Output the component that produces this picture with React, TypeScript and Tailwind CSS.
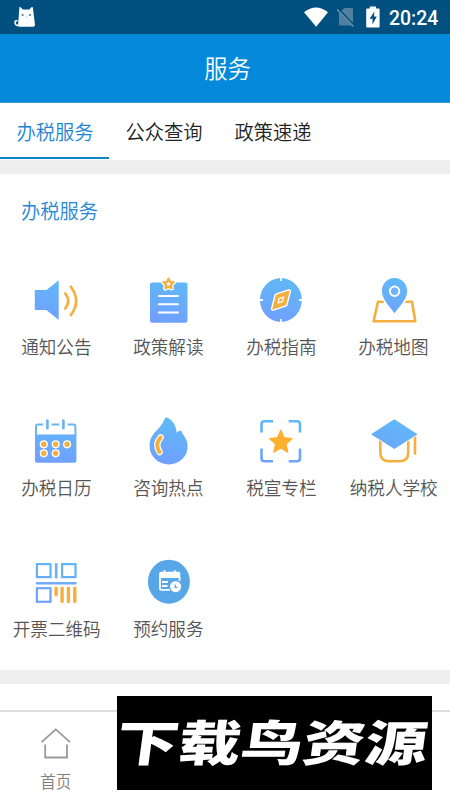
import React, { useState } from 'react';

interface ServiceItem {
    label: string;
    icon: React.ReactNode;
}

const BLUE = 'url(#blue)';
const ORANGE = '#f3b03f';

const STAR = 'M0 -10 L2.9 -3.6 L9.8 -2.9 L4.6 1.7 L6.1 8.6 L0 5 L-6.1 8.6 L-4.6 1.7 L-9.8 -2.9 L-2.9 -3.6 Z';

const services: ServiceItem[] = [
    {
        label: '通知公告',
        icon: (
            <>
                <path d="M3.8 15H15.5L27.7 5.3V45L15.5 35H3.8Z" fill={BLUE} />
                <path d="M34.2 18.5Q40.5 26 34.2 33.5M39.8 11.8Q50.5 26 39.8 40" fill="none" stroke={ORANGE} strokeWidth="2.7" strokeLinecap="round" />
            </>
        ),
    },
    {
        label: '政策解读',
        icon: (
            <>
                <rect x="6" y="7.5" width="37.5" height="40.3" rx="2" fill={BLUE} />
                <path d="M14.8 21H34M14.8 29.2H34M14.8 37.6H34" stroke="#fff" strokeWidth="2" strokeLinecap="round" />
                <path d={STAR} transform="translate(24.5 8.8) scale(.52)" fill="#fff" stroke="#fff" strokeWidth="9" strokeLinejoin="round" />
                <path d={STAR} transform="translate(24.5 8.8) scale(.52)" fill="#fff" stroke={ORANGE} strokeWidth="4.2" strokeLinejoin="round" />
            </>
        ),
    },
    {
        label: '办税指南',
        icon: (
            <>
                <ellipse cx="24.9" cy="25" rx="20.9" ry="22" fill={BLUE} />
                <path d="M24.9 2V6M24.9 44V48M3 25H7M43 25H47" stroke="#fff" strokeWidth="1.8" />
                <path d="M33 16.2L20.4 20.4L17 33.8L29.6 29.6Z" fill={ORANGE} stroke="#fff" strokeWidth="4.2" strokeLinejoin="round" />
                <path d="M33 16.2L20.4 20.4L17 33.8L29.6 29.6Z" fill={ORANGE} stroke={ORANGE} strokeWidth="1.4" strokeLinejoin="round" />
                <path d="M27.6 22.2L23.1 23.5L22.2 27.9L26.7 26.5Z" fill={ORANGE} stroke="#fff" strokeWidth="1.2" />
            </>
        ),
    },
    {
        label: '办税地图',
        icon: (
            <>
                <path d="M9 26.8H43L46.3 46.2H4.6Z" fill="none" stroke={ORANGE} strokeWidth="2.6" strokeLinejoin="round" />
                <path d="M25.5 38.3C22 33 12.9 24.5 12.9 16.2C12.9 8.8 18.4 3 25.5 3S38.2 8.8 38.2 16.2C38.2 24.5 29 33 25.5 38.3Z" fill={BLUE} stroke="#fff" strokeWidth="4" paintOrder="stroke" />
                <circle cx="25.6" cy="16.2" r="4.7" fill="#6fb4ff" stroke="#fff" strokeWidth="2" />
            </>
        ),
    },
    {
        label: '办税日历',
        icon: (
            <>
                <path d="M4 18.4H45.4V44.7Q45.4 46.7 43.4 46.7H6Q4 46.7 4 44.7Z" fill={BLUE} />
                <path d="M12.2 8.6H7Q5 8.6 5 10.6V20M36.6 8.6H42.4Q44.4 8.6 44.4 10.6V20M20.6 8.6H28.2" fill="none" stroke="#6bb3fb" strokeWidth="2" />
                <path d="M16.4 4.6V12.2M32.4 4.6V12.2" stroke="#65b3f8" strokeWidth="2.6" strokeLinecap="round" />
                <g fill={ORANGE} stroke="#fff" strokeWidth="1.4">
                    <circle cx="12.8" cy="28.3" r="3.4" />
                    <circle cx="24.7" cy="28.3" r="3.4" />
                    <circle cx="36.1" cy="28.3" r="3.4" />
                    <circle cx="12.8" cy="37.3" r="3.4" />
                    <circle cx="24.7" cy="37.3" r="3.4" />
                </g>
            </>
        ),
    },
    {
        label: '咨询热点',
        icon: (
            <>
                <path d="M23.6 1.7C29 4.5 32.3 10 32.7 17C34 14.8 35.7 14.2 37.4 15C38.2 19 43.6 21.5 43.6 30.5C43.6 40.8 35 48.4 24.8 48.4S5.6 40.8 5.6 30C5.6 17 16 14.5 19.8 4.6C20.6 2.4 21.8 .9 23.6 1.7Z" fill={BLUE} />
                <path d="M16.6 21.4Q10.4 28.5 15.6 36" fill="none" stroke="#fff" strokeWidth="6.4" strokeLinecap="round" />
                <path d="M16.6 21.4Q10.4 28.5 15.6 36" fill="none" stroke={ORANGE} strokeWidth="4" strokeLinecap="round" />
            </>
        ),
    },
    {
        label: '税宣专栏',
        icon: (
            <>
                <path d="M17 5.2H8.5Q5.5 5.2 5.5 8.2V16.5M32.7 5.2H41Q44 5.2 44 8.2V16.5M5.5 32.5V42.2Q5.5 45.2 8.5 45.2H17M44 32.5V42.2Q44 45.2 41 45.2H32.7" fill="none" stroke={BLUE} strokeWidth="2.6" />
                <path d={STAR} transform="translate(24.8 26) scale(1.15 1.2)" fill="#fcb02e" stroke="#fcb02e" strokeWidth="1" strokeLinejoin="round" />
            </>
        ),
    },
    {
        label: '纳税人学校',
        icon: (
            <>
                <path d="M11.3 23V36.5Q11.3 45.2 20 45.2H30.5Q39.2 45.2 39.2 36.5V23M46 20V37.5" fill="none" stroke={ORANGE} strokeWidth="2.6" strokeLinecap="round" />
                <path d="M25.3 3.3L48.6 18.3L25.3 33L2 18.3Z" fill={BLUE} stroke="#fff" strokeWidth="1.6" paintOrder="stroke" />
            </>
        ),
    },
    {
        label: '开票二维码',
        icon: (
            <g transform="translate(0 -1)">
                <g fill="none" stroke={BLUE} strokeWidth="2.2">
                    <rect x="5.9" y="8.1" width="13.6" height="13" />
                    <rect x="31.1" y="8.1" width="13.4" height="13" />
                    <rect x="5.9" y="32.2" width="13.6" height="13.6" />
                </g>
                <rect x="23.9" y="7" width="2.6" height="15.5" rx="1" fill="#70adff" />
                <rect x="4.8" y="26" width="40.8" height="2.6" rx="1" fill="#70adff" />
                <path d="M25.1 32.3V38.8M31.1 32.3V45.5M37.4 32.3V45.5M43.8 32.3V45.5" stroke={ORANGE} strokeWidth="3.4" strokeLinecap="round" />
            </g>
        ),
    },
    {
        label: '预约服务',
        icon: (
            <g transform="translate(0 -1)">
                <ellipse cx="24.9" cy="25.7" rx="21" ry="22" fill="#57a7e8" />
                <path d="M15.2 22V17.3Q15.2 15.8 16.7 15.8H34.7Q36.2 15.8 36.2 17.3V22Z" fill="#fff" />
                <path d="M20.5 14.8V18M30.8 14.8V18" stroke="#fff" strokeWidth="1.8" strokeLinecap="round" />
                <path d="M16 21V32.8Q16 33.8 17 33.8H26M35.6 21V25" fill="none" stroke="#fff" strokeWidth="1.8" />
                <path d="M18 26H24M18 30H23.5" stroke="#fff" strokeWidth="1.8" />
                <circle cx="31.6" cy="30.7" r="6" fill="#fff" stroke="#57a7e8" strokeWidth="1" />
                <path d="M31.2 28.6V31.3H33.4" fill="none" stroke="#57a7e8" strokeWidth="1.3" />
            </g>
        ),
    },
];

const tabs = ['办税服务', '公众查询', '政策速递'];

const StatusBar: React.FC = () => (
    <div className="flex h-[34px] items-center bg-[#02507f] pr-[11px] pl-[13px]">
        <svg width="23" height="22" viewBox="0 0 23 22">
            <path d="M6.4 1.2Q7 .4 8 1.6L9.8 3.6H16.3L18.4 1.3Q19.4 .4 19.9 1.8L22 19Q22 20.8 20 20.8H8Q5.8 20.8 5 20Z" fill="#fff" />
            <path d="M7 19.5Q1.8 19.8 2 16Q2.2 14.2 4 14.8" fill="none" stroke="#fff" strokeWidth="1.5" strokeLinecap="round" />
            <circle cx="9.6" cy="9" r="1" fill="#3b7299" />
            <circle cx="17" cy="9" r="1" fill="#3b7299" />
            <path d="M12.6 10.6H14L13.3 11.4Z" fill="#7193ae" />
        </svg>
        <div className="flex-1" />
        <svg width="24" height="20" viewBox="0 0 24 20" className="mr-[9px]">
            <path d="M0 5.2Q12 -4.4 24 5.2L12.2 19.8Z" fill="#fff" />
        </svg>
        <svg width="18" height="20" viewBox="0 0 18 20" className="mr-[11px]">
            <path d="M7.3 1H15Q16 1 16 2V18.6H3Q2 18.6 2 17.6V6.2Z" fill="#507f9f" />
            <path d="M.3 1.6L17 19" stroke="#02507f" strokeWidth="3" />
            <path d="M0 2.4L16.4 19.4" stroke="#6c94b0" strokeWidth="1.5" />
        </svg>
        <svg width="14" height="22" viewBox="0 0 14 22" className="mr-[9px]">
            <path d="M3.8 0.4H10V2.6H12.6Q13.6 2.6 13.6 3.6V20.6Q13.6 21.6 12.6 21.6H1.2Q.2 21.6 .2 20.6V3.6Q.2 2.6 1.2 2.6H3.8Z" fill="#fff" />
            <path d="M8.4 5.4L3.6 12.8H6.5V18.4L10.8 10.6H8Z" fill="#02507f" />
        </svg>
        <span className="mt-[2px] w-[50px] origin-left scale-x-[0.97] font-[Roboto] text-[20px] leading-none font-medium whitespace-nowrap text-white">20:24</span>
    </div>
);

const App: React.FC = () => {
    const [activeTab, setActiveTab] = useState(0);

    return (
        <div className="relative flex h-[800px] w-[450px] flex-col overflow-hidden bg-white font-['Noto_Sans_CJK_SC',sans-serif]">
            {/* Gradient shared by the service icons */}
            <svg width="0" height="0" className="absolute">
                <defs>
                    <linearGradient id="blue" gradientUnits="userSpaceOnUse" x1="30" y1="2" x2="20" y2="48">
                        <stop offset="0" stopColor="#5ebaf5" />
                        <stop offset="1" stopColor="#719fff" />
                    </linearGradient>
                </defs>
            </svg>

            <StatusBar />

            <header className="flex h-[69px] items-center justify-center border-b border-[#3699da] bg-[#0589db] pl-[5px]">
                <h1 className="scale-x-[0.95] text-[24.5px] leading-none font-[350] text-white">服务</h1>
            </header>

            <nav className="flex h-[56px]">
                {tabs.map((tab, index) => (
                    <button
                        key={tab}
                        onClick={() => setActiveTab(index)}
                        className={`flex w-[109px] items-center justify-center border-b-2 pt-[3px] ${
                            index === activeTab ? 'border-[#1483c4] text-[#1c86d6]' : 'border-transparent text-[#222]'
                        }`}
                    >
                        <span className="scale-x-[0.94] text-[20.5px] leading-none font-[350] whitespace-nowrap">{tab}</span>
                    </button>
                ))}
            </nav>

            <div className="mt-px h-[14px] bg-[#eeeeee]" />

            <section className="h-[496px] shrink-0">
                <h2 className="ml-[21px] flex h-[73px] origin-left scale-x-[0.94] items-center text-[20.5px] leading-none font-[350] text-[#2487d8]">办税服务</h2>
                <div className="mt-[28px] grid grid-cols-4 gap-y-[58px]">
                    {services.map((service) => (
                        <div key={service.label} className="flex flex-col items-center">
                            <svg width="50" height="50" viewBox="0 0 50 50">
                                {service.icon}
                            </svg>
                            <span className="mt-[9px] h-[24px] scale-x-[0.94] text-[18.7px] leading-[24px] font-[350] whitespace-nowrap text-[#555]">
                                {service.label}
                            </span>
                        </div>
                    ))}
                </div>
            </section>

            <div className="h-[14px] shrink-0 bg-[#eeeeee]" />
            <div className="h-[26px] shrink-0" />

            <footer className="flex flex-1 border-t-2 border-[#dedede]">
                <div className="flex w-[112px] flex-col items-center pt-[15px]">
                    <svg width="32" height="32" viewBox="0 0 32 32" fill="none" stroke="#999" strokeWidth="1.8">
                        <path d="M1.5 15.2L15.8 2.4L30 15.2M5.2 17.5V30.5H27V17.5" />
                    </svg>
                    <span className="mt-[12px] scale-x-[0.93] text-[16.8px] leading-[20px] font-[350] text-[#808080]">首页</span>
                </div>
            </footer>

            {/* Banner floating over the bottom bar */}
            <div className="absolute top-[696px] left-[117px] flex h-[94px] w-[315px] items-center justify-center bg-black pr-[4px] pb-[5px]">
                <span className="-skew-x-6 scale-x-[1.22] scale-y-[0.95] text-[51px] leading-none font-black whitespace-nowrap text-white">下载鸟资源</span>
            </div>
        </div>
    );
};

export default App;
